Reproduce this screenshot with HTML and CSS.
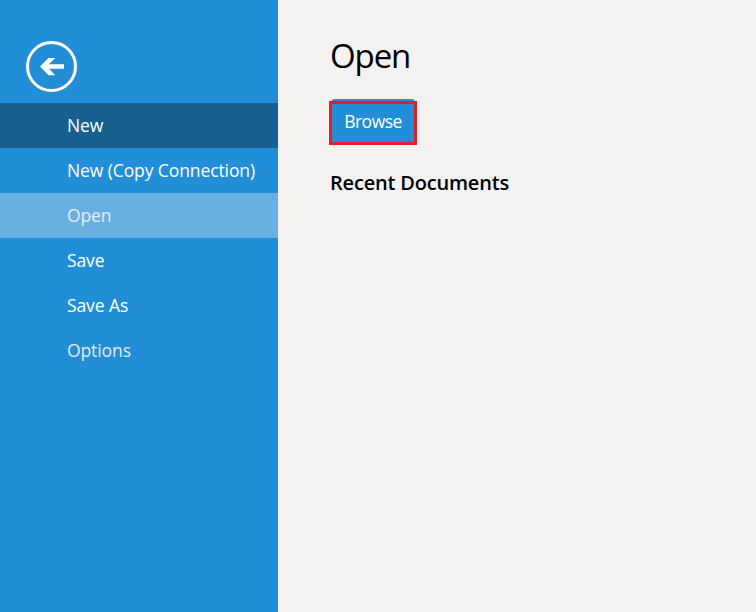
FILE: index.html
```html
<!DOCTYPE html>
<html lang="en">
<head>
<meta charset="utf-8">
<title>Open</title>
<link rel="stylesheet" href="styles.css">
</head>
<body>
<div class="backstage">
  <aside class="sidebar">
    <button class="back" aria-label="Back">
      <svg width="51" height="51" viewBox="0 0 51 51">
        <circle cx="25.5" cy="25.5" r="24" fill="none" stroke="#fff" stroke-width="3"/>
        <path d="M14 25.5L22.5 17H29.3L23 23.3H38V27.8H23L29.3 34.2H22.5Z" fill="#fff"/>
      </svg>
    </button>
    <nav class="menu">
      <a class="item item-hover">New</a>
      <a class="item">New (Copy Connection)</a>
      <a class="item item-active">Open</a>
      <a class="item">Save</a>
      <a class="item">Save As</a>
      <a class="item item-dim">Options</a>
    </nav>
  </aside>
  <main class="content">
    <h1 class="title">Open</h1>
    <div class="browse-wrap">
      <button class="browse">Browse</button>
      <span class="highlight"></span>
    </div>
    <h2 class="recent">Recent Documents</h2>
  </main>
</div>
</body>
</html>
```
FILE: styles.css
```css
* { box-sizing: border-box; }
body { margin: 0; font-family: "Open Sans", "Noto Sans", sans-serif; }
.backstage { display: flex; width: 756px; height: 612px; background: #f3f2f1; }
.sidebar { width: 278px; background: #228ed7; color: #fff; }
.back { display: block; width: 51px; height: 51px; margin: 41px 0 11px 26px; padding: 0; border: 0; background: none; }
.back svg { display: block; }
.item { display: block; height: 45px; padding: 10px 0 0 67px; font-size: 17.5px; line-height: 24px; letter-spacing: -0.1px; white-space: nowrap; }
.item-hover { background: #186090; }
.item-active { background: #69b0e2; color: #e6eef4; }
.item-dim { color: #e6e8ea; }
.content { padding: 32px 0 0 52px; color: #000; }
.title { margin: 0; height: 67px; font-size: 33px; line-height: 48px; font-weight: 400; letter-spacing: -1.1px; }
.browse-wrap { position: relative; width: 86px; height: 45px; }
.browse { display: block; width: 86px; height: 45px; padding: 0 0 1px; border: 0; border-radius: 5px; background: #228ed7; color: #fff; font: 17.5px/24px "Open Sans", "Noto Sans", sans-serif; letter-spacing: -0.5px; }
.highlight { position: absolute; left: -1px; top: 2px; width: 88px; height: 44px; border: 3px solid #ed1c24; }
.recent { margin: 25px 0 0; font-size: 20px; line-height: 28px; font-weight: 600; letter-spacing: -0.19px; }
```
